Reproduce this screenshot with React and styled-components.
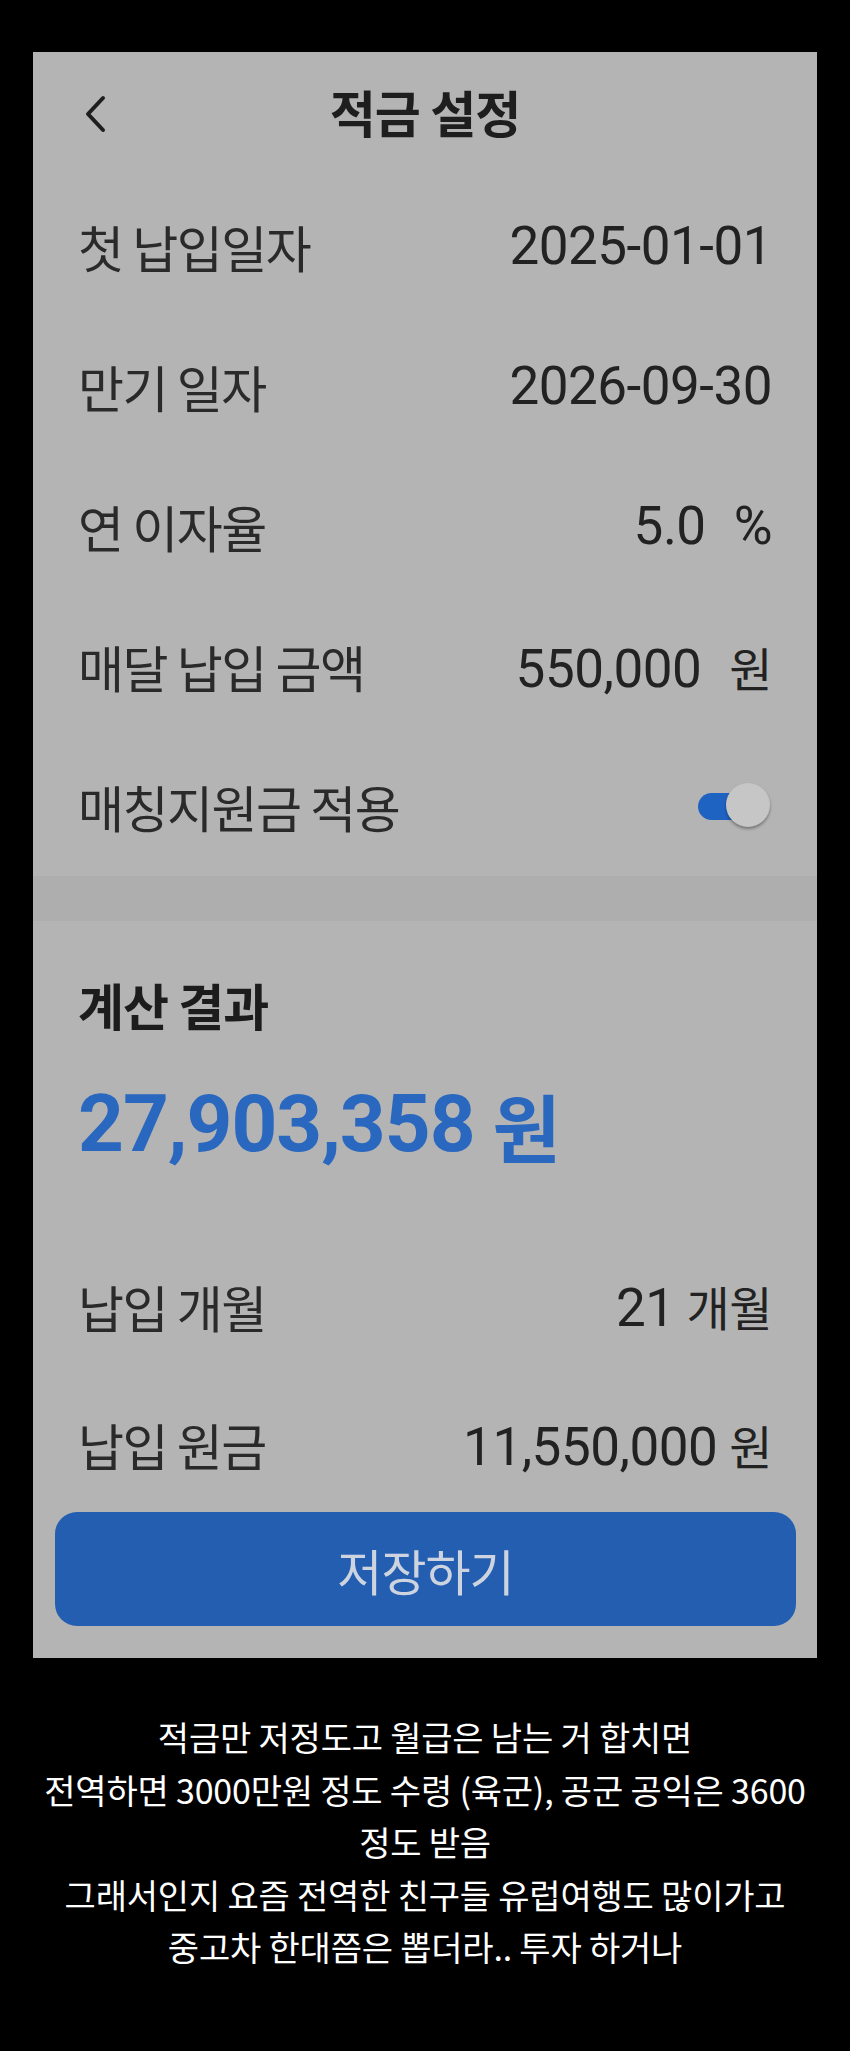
import React from "react";
import styled, { createGlobalStyle } from "styled-components";

const Global = createGlobalStyle`
  html, body { margin: 0; padding: 0; background: #000; }
  * { box-sizing: border-box; }
`;

const KR = `"Noto Sans CJK KR", "Noto Sans", sans-serif`;
const NUM = `Roboto, "Noto Sans CJK KR", sans-serif`;

const Page = styled.div`
  width: 850px;
  height: 2051px;
  background: #000;
  display: flex;
  flex-direction: column;
  padding-top: 52px;
  overflow: hidden;
`;

const Phone = styled.div`
  margin: 0 33px;
  width: 784px;
  height: 1606px;
  background: #b4b4b4;
  display: flex;
  flex-direction: column;
`;

const Header = styled.div`
  height: 124px;
  display: grid;
  grid-template-columns: 1fr auto 1fr;
  align-items: center;
  padding: 0 50px;
`;

const Back = styled.div`
  display: flex;
  align-items: center;
`;

const Title = styled.h1`
  margin: 0;
  text-align: center;
  font-family: ${KR};
  font-weight: 700;
  font-size: 50px;
  color: #1e1e1e;
  letter-spacing: -1px;
  padding-bottom: 6px;
`;

const Row = styled.div`
  height: ${(p) => p.$h || 140}px;
  display: flex;
  align-items: center;
  justify-content: space-between;
  padding: 0 45px;
`;

const Label = styled.span`
  font-family: ${KR};
  font-size: 50px;
  font-weight: 400;
  color: #2a2a2a;
  letter-spacing: -1.5px;
`;

const Value = styled.span`
  font-family: ${NUM};
  font-size: 53px;
  font-weight: 400;
  color: #222;
  display: flex;
  align-items: baseline;
  gap: ${(p) => p.$gap || 12}px;
  letter-spacing: -0.5px;
`;

const Unit = styled.span`
  font-family: ${p => (p.$kr ? KR : NUM)};
  font-size: ${p => (p.$kr ? 47 : 53)}px;
  color: #222;
`;

const Toggle = styled.div`
  position: relative;
  width: 72px;
  height: 46px;
  margin-right: 2px;
`;

const Track = styled.div`
  position: absolute;
  left: 0;
  top: 10px;
  width: 60px;
  height: 27px;
  border-radius: 14px;
  background: #1f63c2;
`;

const Thumb = styled.div`
  position: absolute;
  right: 0;
  top: 0;
  width: 44px;
  height: 44px;
  border-radius: 50%;
  background: #c6c6c6;
  box-shadow: 0 2px 3px rgba(0, 0, 0, 0.35);
`;

const Band = styled.div`
  height: 45px;
  background: #aeaeae;
`;

const Results = styled.div`
  display: flex;
  flex-direction: column;
  flex: 1;
`;

const SectionTitle = styled.h2`
  margin: 0;
  height: 166px;
  display: flex;
  align-items: center;
  padding: 0 45px;
  font-family: ${KR};
  font-weight: 700;
  font-size: 50px;
  color: #1c1c1c;
  letter-spacing: -1px;
`;

const Total = styled.div`
  padding: 0 45px;
  height: 74px;
  display: flex;
  align-items: center;
  font-family: ${NUM};
  font-weight: 700;
  font-size: 80px;
  color: #2a68bf;
  gap: 18px;
  letter-spacing: -1px;
`;

const TotalUnit = styled.span`
  font-family: ${KR};
  font-size: 74px;
  font-weight: 700;
`;

const ResultRows = styled.div`
  margin-top: 74px;
  display: flex;
  flex-direction: column;
`;

const SaveButton = styled.button`
  margin: 0 21px 0 22px;
  height: 114px;
  border: none;
  border-radius: 22px;
  background: #235eb1;
  color: #cdd4df;
  font-family: ${KR};
  font-size: 49px;
  font-weight: 400;
  letter-spacing: -1px;
`;

const Caption = styled.div`
  padding-top: 53px;
  display: flex;
  flex-direction: column;
  align-items: center;
`;

const CaptionLine = styled.p`
  margin: 0;
  font-family: ${KR};
  font-size: 34px;
  line-height: 52.6px;
  color: #fff;
  text-align: center;
  letter-spacing: -0.2px;
`;

function Chevron() {
  return (
    <svg width="24" height="40" viewBox="0 0 24 40">
      <path d="M20 4 L5 20 L20 36" fill="none" stroke="#1e1e1e" strokeWidth="4" strokeLinecap="round" strokeLinejoin="round" />
    </svg>
  );
}

export default function App() {
  return (
    <>
      <Global />
      <Page>
        <Phone>
          <Header>
            <Back><Chevron /></Back>
            <Title>적금 설정</Title>
            <span />
          </Header>
          <Row>
            <Label>첫 납입일자</Label>
            <Value>2025-01-01</Value>
          </Row>
          <Row>
            <Label>만기 일자</Label>
            <Value>2026-09-30</Value>
          </Row>
          <Row>
            <Label>연 이자율</Label>
            <Value $gap={28}>5.0<Unit>%</Unit></Value>
          </Row>
          <Row>
            <Label>매달 납입 금액</Label>
            <Value $gap={28}>550,000<Unit $kr>원</Unit></Value>
          </Row>
          <Row>
            <Label>매칭지원금 적용</Label>
            <Toggle>
              <Track />
              <Thumb />
            </Toggle>
          </Row>
          <Band />
          <Results>
            <SectionTitle>계산 결과</SectionTitle>
            <Total>27,903,358<TotalUnit>원</TotalUnit></Total>
            <ResultRows>
              <Row $h={141}>
                <Label>납입 개월</Label>
                <Value $gap={12}>21<Unit $kr>개월</Unit></Value>
              </Row>
              <Row $h={136}>
                <Label>납입 원금</Label>
                <Value $gap={12}>11,550,000<Unit $kr>원</Unit></Value>
              </Row>
            </ResultRows>
            <SaveButton>저장하기</SaveButton>
          </Results>
        </Phone>
        <Caption>
          <CaptionLine>적금만 저정도고 월급은 남는 거 합치면</CaptionLine>
          <CaptionLine>전역하면 3000만원 정도 수령 (육군), 공군 공익은 3600</CaptionLine>
          <CaptionLine>정도 받음</CaptionLine>
          <CaptionLine>그래서인지 요즘 전역한 친구들 유럽여행도 많이가고</CaptionLine>
          <CaptionLine>중고차 한대쯤은 뽑더라.. 투자 하거나</CaptionLine>
        </Caption>
      </Page>
    </>
  );
}
